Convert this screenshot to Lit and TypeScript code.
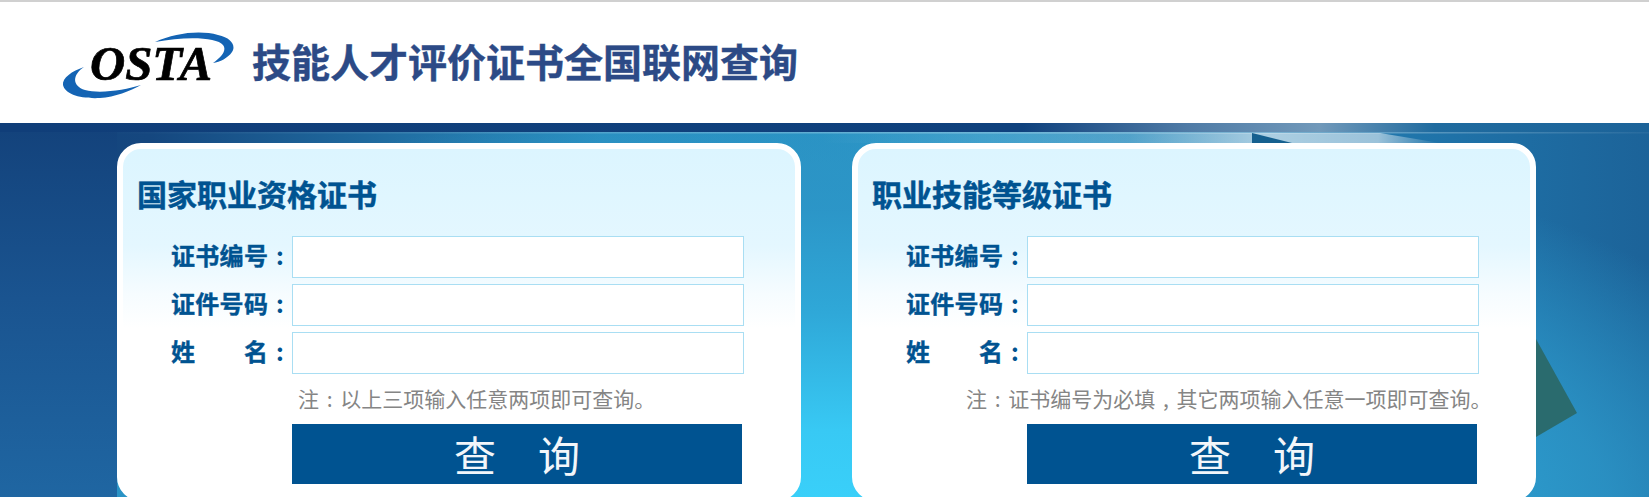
import { LitElement, html, css, svg } from "lit";
import { customElement } from "lit/decorators.js";

const FONT = css`"Noto Sans CJK SC", "Liberation Sans", sans-serif`;

@customElement("query-card")
class QueryCard extends LitElement {
  static properties = { heading: {}, note: {}, wide: { type: Boolean } };
  heading = "";
  note = "";
  wide = false;
  static styles = css`
    :host { display: block; width: 684px; height: 358px; }
    .card {
      box-sizing: border-box; height: 100%;
      border: 6px solid #fff; border-radius: 24px;
      background: linear-gradient(#dcf5ff 0%, #e4f7ff 28%, #f6fcff 42%, #fff 52%);
      padding: 17px 0 0 14px;
      font-family: ${FONT};
    }
    h2 {
      margin: 0; height: 54px; line-height: 54px;
      font-size: 30px; font-weight: 700; color: #005391;
      -webkit-text-stroke: 0.5px #005391;
    }
    .rows { display: flex; flex-direction: column; gap: 6px; margin-top: 16px; }
    .row { display: flex; align-items: center; padding-left: 34px; }
    .lab {
      width: 96px; font-size: 24px; font-weight: 700; line-height: 35px; padding-bottom: 5px;
      color: #005391; white-space: pre; letter-spacing: 0.3px;
      -webkit-text-stroke: 0.4px #005391;
    }
    .colon {
      width: 25px; padding: 0 0 5px 9px; box-sizing: border-box;
      font-size: 24px; font-weight: 700; color: #005391; line-height: 35px;
    }
    input {
      box-sizing: border-box; width: 452px; height: 42px; margin: 0;
      border: 1px solid #a9def3; background: #fff; outline: none;
    }
    .note {
      margin-left: 161px; height: 45px;
      line-height: 48px; font-size: 21px; color: #858585; word-spacing: 3px;
      white-space: nowrap; font-weight: 400;
    }
    .note.wide { margin-left: 94px; }
    button {
      display: block; width: 450px; height: 60px; margin: 5px 0 0 155px;
      border: 0; padding: 0; background: #005391; color: #f2f6fa;
      font-family: inherit; font-size: 42px; font-weight: 400; line-height: 56px;
      white-space: pre; cursor: pointer;
    }
  `;
  render() {
    const rows = ["证书编号", "证件号码", "姓\u3000\u3000名"];
    return html`<div class="card">
      <h2>${this.heading}</h2>
      <div class="rows">
        ${rows.map(
          (r) => html`<div class="row"><span class="lab">${r}</span><span class="colon">:</span><input type="text" /></div>`
        )}
      </div>
      <div class="note ${this.wide ? "wide" : ""}">${this.note}</div>
      <button>查\u3000询</button>
    </div>`;
  }
}

const backdrop = svg`
  <svg class="bd" width="1649" height="374" viewBox="0 123 1649 374">
    <defs>
      <linearGradient id="band" x1="0" x2="1" y1="0" y2="0">
        <stop offset="0" stop-color="#103e79"/>
        <stop offset=".62" stop-color="#0f417d"/>
        <stop offset=".72" stop-color="#4f7ba6"/>
        <stop offset=".8" stop-color="#7199ba"/>
        <stop offset=".87" stop-color="#1f6b9f"/>
        <stop offset="1" stop-color="#1c6399"/>
      </linearGradient>
      <linearGradient id="streak" x1="0" x2="1" y1="0" y2="0">
        <stop offset="0" stop-color="#fff" stop-opacity="0"/>
        <stop offset=".5" stop-color="#fff" stop-opacity=".2"/>
        <stop offset=".72" stop-color="#fff" stop-opacity=".62"/>
        <stop offset=".9" stop-color="#fff" stop-opacity=".55"/>
        <stop offset="1" stop-color="#fff" stop-opacity="0"/>
      </linearGradient>
      <linearGradient id="hair" x1="0" x2="1" y1="0" y2="0">
        <stop offset="0" stop-color="#fff" stop-opacity="0"/>
        <stop offset=".4" stop-color="#fff" stop-opacity=".22"/>
        <stop offset=".75" stop-color="#fff" stop-opacity=".4"/>
        <stop offset="1" stop-color="#fff" stop-opacity=".05"/>
      </linearGradient>
    </defs>
    <rect x="0" y="123" width="1649" height="9" fill="url(#band)"/>
    <rect x="100" y="132" width="1549" height="1.5" fill="url(#hair)"/>
    <polygon points="820,133 1380,133 1440,143 820,143" fill="url(#streak)"/>
    <polygon points="1252,133 1292,143 1252,143" fill="#15608f"/>
    <polygon points="1536,339 1577,413 1536,437" fill="#2a6b6e"/>
  </svg>`;

@customElement("app-root")
class AppRoot extends LitElement {
  static styles = css`
    :host { display: block; width: 1649px; height: 497px; overflow: hidden; background: #fff; }
    .top {
      box-sizing: border-box; height: 123px; border-top: 2px solid #d0d0d0;
      display: flex; align-items: center; padding: 0 0 0 62px; gap: 17px;
    }
    .logo { width: 173px; height: 70px; flex: none; margin-top: 5px; }
    .logo text {
      font-family: "Liberation Serif", serif; font-style: italic; font-weight: 700;
      font-size: 48px; fill: #000; stroke: #000; stroke-width: 0.7px;
    }
    .sitetitle {
      font-family: ${FONT}; font-weight: 700; font-size: 39px; line-height: 50px;
      color: #2c4a86; white-space: nowrap; margin-top: -6px;
      -webkit-text-stroke: 0.4px #2c4a86;
    }
    .stage {
      position: relative; height: 374px; overflow: hidden;
      background:
        linear-gradient(#13427b 0%, #1a5490 47%, #1f66a2 100%) no-repeat 0 0 / 117px 100%,
        radial-gradient(ellipse 1050px 420px at 825px 400px, #3ad2fb 0%, #38c9f4 22%, #2fa8d8 50%, rgba(44,150,200,.85) 75%, rgba(44,150,200,0) 100%),
        linear-gradient(90deg, #13427b 0, #15477f 150px, #2a8fc0 600px, #2b95c5 60%, #1f72a8 88%, #1c6399 100%);
    }
    .bd { position: absolute; left: 0; top: 0; }
    .cards { position: relative; display: flex; gap: 51px; padding: 20px 0 0 117px; }
  `;
  render() {
    return html`
      <div class="top">
        <svg class="logo" viewBox="62 30 173 70">
          <path d="M155 42 C175 33 200 30 218 35 C232 38 236 46 232 52 C228 58 220 62 213 63 C222 57 227 50 223 45 C217 37 185 36 155 42 Z" fill="#1464b4"/>
          <path d="M84 67 C72 71 62 78 63 85 C65 94 80 99 100 98 C115 97 130 91 141 85 C125 90 100 94 85 90 C72 86 72 75 84 67 Z" fill="#1464b4"/>
          <text x="90" y="80" textLength="122" lengthAdjust="spacingAndGlyphs">OSTA</text>
        </svg>
        <div class="sitetitle">技能人才评价证书全国联网查询</div>
      </div>
      <div class="stage">
        ${backdrop}
        <div class="cards">
          <query-card heading="国家职业资格证书" note="注 : 以上三项输入任意两项即可查询。"></query-card>
          <query-card heading="职业技能等级证书" wide note="注 : 证书编号为必填 , 其它两项输入任意一项即可查询。"></query-card>
        </div>
      </div>
    `;
  }
}
